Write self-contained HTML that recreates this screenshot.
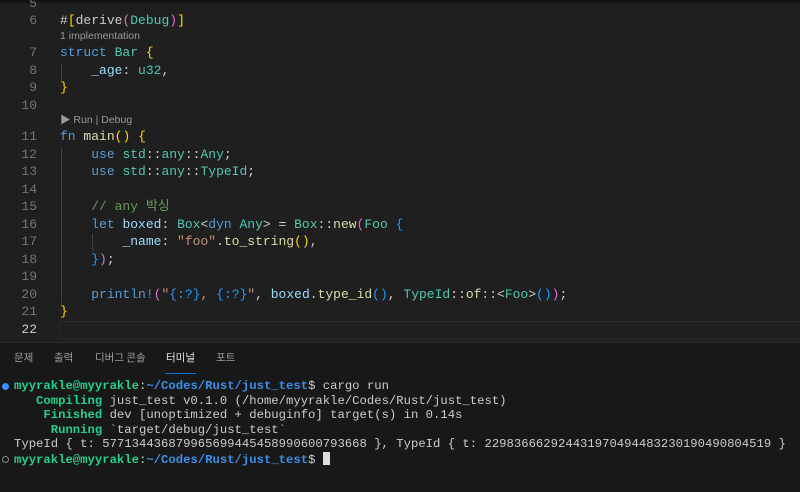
<!DOCTYPE html>
<html><head><meta charset="utf-8"><style>
*{margin:0;padding:0;box-sizing:border-box}
body{width:800px;height:492px;background:#1f1f1f;overflow:hidden;position:relative;font-family:"Liberation Mono","Noto Sans CJK KR",monospace}
#top{position:absolute;left:0;top:0;width:800px;height:3px;background:#141414}
.ln{position:absolute;left:0;width:37px;text-align:right;font-size:13px;color:#6e7681;line-height:17px}
.cd{position:absolute;left:60px;font-size:13px;color:#cccccc;white-space:pre;line-height:17px}
.lens{position:absolute;left:60px;font-family:"Liberation Sans","Noto Sans CJK KR",sans-serif;font-size:10.5px;color:#999;line-height:14px}
.k{color:#569cd6}.t{color:#4ec9b0}.v{color:#9cdcfe}.f{color:#dcdcaa}.s{color:#ce9178}.c{color:#6a9955}.y{color:#ffd700}.p{color:#da70d6}.b{color:#179fff}.m{color:#569cd6}
.guide{position:absolute;width:1px;background:#404040}
#cur{position:absolute;left:59px;top:321px;width:741px;height:18px;border:1px solid #2a2a2a;border-right:none}
#panel{position:absolute;left:0;top:342px;width:800px;height:150px;background:#181818;border-top:1px solid #2b2b2b}
.tab{position:absolute;top:7px;font-family:"Noto Sans CJK KR",sans-serif;font-size:10.5px;color:#9d9d9d}
.term{position:absolute;left:14px;font-size:12.25px;color:#cccccc;white-space:pre;line-height:14.6px}
.g{color:#23d18b;font-weight:bold}.bl{color:#3b8eea;font-weight:bold}
</style></head><body>
<div id="top"></div>
<div class="ln" style="top:-5px">5</div>
<div class="ln" style="top:12px">6</div><div class="cd" style="top:12px">#<span class="y">[</span>derive<span class="p">(</span><span class="t">Debug</span><span class="p">)</span><span class="y">]</span></div>
<div class="lens" style="top:29px">1 implementation</div>
<div class="ln" style="top:44px">7</div><div class="cd" style="top:44px"><span class="k">struct</span> <span class="t">Bar</span> <span class="y">{</span></div>
<div class="ln" style="top:62px">8</div><div class="cd" style="top:62px">    <span class="v">_age</span>: <span class="t">u32</span>,</div>
<div class="ln" style="top:79px">9</div><div class="cd" style="top:79px"><span class="y">}</span></div>
<div class="ln" style="top:97px">10</div>
<div class="lens" style="top:113px">▶ Run | Debug</div>
<div class="ln" style="top:128px">11</div><div class="cd" style="top:128px"><span class="k">fn</span> <span class="f">main</span><span class="y">()</span> <span class="y">{</span></div>
<div class="ln" style="top:146px">12</div><div class="cd" style="top:146px">    <span class="k">use</span> <span class="t">std</span>::<span class="t">any</span>::<span class="t">Any</span>;</div>
<div class="ln" style="top:163px">13</div><div class="cd" style="top:163px">    <span class="k">use</span> <span class="t">std</span>::<span class="t">any</span>::<span class="t">TypeId</span>;</div>
<div class="ln" style="top:181px">14</div>
<div class="ln" style="top:198px">15</div><div class="cd" style="top:198px">    <span class="c">// any 박싱</span></div>
<div class="ln" style="top:216px">16</div><div class="cd" style="top:216px">    <span class="k">let</span> <span class="v">boxed</span>: <span class="t">Box</span>&lt;<span class="k">dyn</span> <span class="t">Any</span>&gt; = <span class="t">Box</span>::<span class="f">new</span><span class="p">(</span><span class="t">Foo</span> <span class="b">{</span></div>
<div class="ln" style="top:233px">17</div><div class="cd" style="top:233px">        <span class="v">_name</span>: <span class="s">"foo"</span>.<span class="f">to_string</span><span class="y">()</span>,</div>
<div class="ln" style="top:251px">18</div><div class="cd" style="top:251px">    <span class="b">}</span><span class="p">)</span>;</div>
<div class="ln" style="top:268px">19</div>
<div class="ln" style="top:286px">20</div><div class="cd" style="top:286px">    <span class="m">println!</span><span class="p">(</span><span class="s">"</span><span class="b">{:?}</span><span class="s">, </span><span class="b">{:?}</span><span class="s">"</span>, <span class="v">boxed</span>.<span class="f">type_id</span><span class="b">()</span>, <span class="t">TypeId</span>::<span class="f">of</span>::&lt;<span class="t">Foo</span>&gt;<span class="b">()</span><span class="p">)</span>;</div>
<div class="ln" style="top:303px">21</div><div class="cd" style="top:303px"><span class="y">}</span></div>
<div class="ln" style="top:321px;color:#ccc">22</div>
<div class="guide" style="left:61px;top:63px;height:17px"></div>
<div class="guide" style="left:61px;top:147px;height:156px"></div>
<div class="guide" style="left:92px;top:234px;height:17px"></div>
<div id="cur"></div>
<div id="panel">
<div class="tab" style="left:14px">문제</div>
<div class="tab" style="left:54px">출력</div>
<div class="tab" style="left:95px">디버그 콘솔</div>
<div class="tab" style="left:166px;color:#e7e7e7">터미널</div>
<div style="position:absolute;left:165px;top:30px;width:31px;height:1px;background:#0078d4"></div>
<div class="tab" style="left:216px">포트</div>
<div style="position:absolute;left:2px;top:40px;width:7px;height:7px;border-radius:50%;background:#3794ff"></div>
<div style="position:absolute;left:2px;top:113px;width:7px;height:7px;border-radius:50%;border:1px solid #888"></div>
<div class="term" style="top:36px"><span class="g">myyrakle@myyrakle</span>:<span class="bl">~/Codes/Rust/just_test</span>$ cargo run</div>
<div class="term" style="top:50.6px"><span class="g">   Compiling</span> just_test v0.1.0 (/home/myyrakle/Codes/Rust/just_test)</div>
<div class="term" style="top:65.2px"><span class="g">    Finished</span> dev [unoptimized + debuginfo] target(s) in 0.14s</div>
<div class="term" style="top:79.8px"><span class="g">     Running</span> `target/debug/just_test`</div>
<div class="term" style="top:94.4px">TypeId { t: 577134436879965699445458990600793668 }, TypeId { t: 229836662924431970494483230190490804519 }</div>
<div class="term" style="top:109px"><span class="g">myyrakle@myyrakle</span>:<span class="bl">~/Codes/Rust/just_test</span>$ <span style="display:inline-block;width:7px;height:13px;background:#ddd;vertical-align:-2px"></span></div>
</div>
</body></html>
